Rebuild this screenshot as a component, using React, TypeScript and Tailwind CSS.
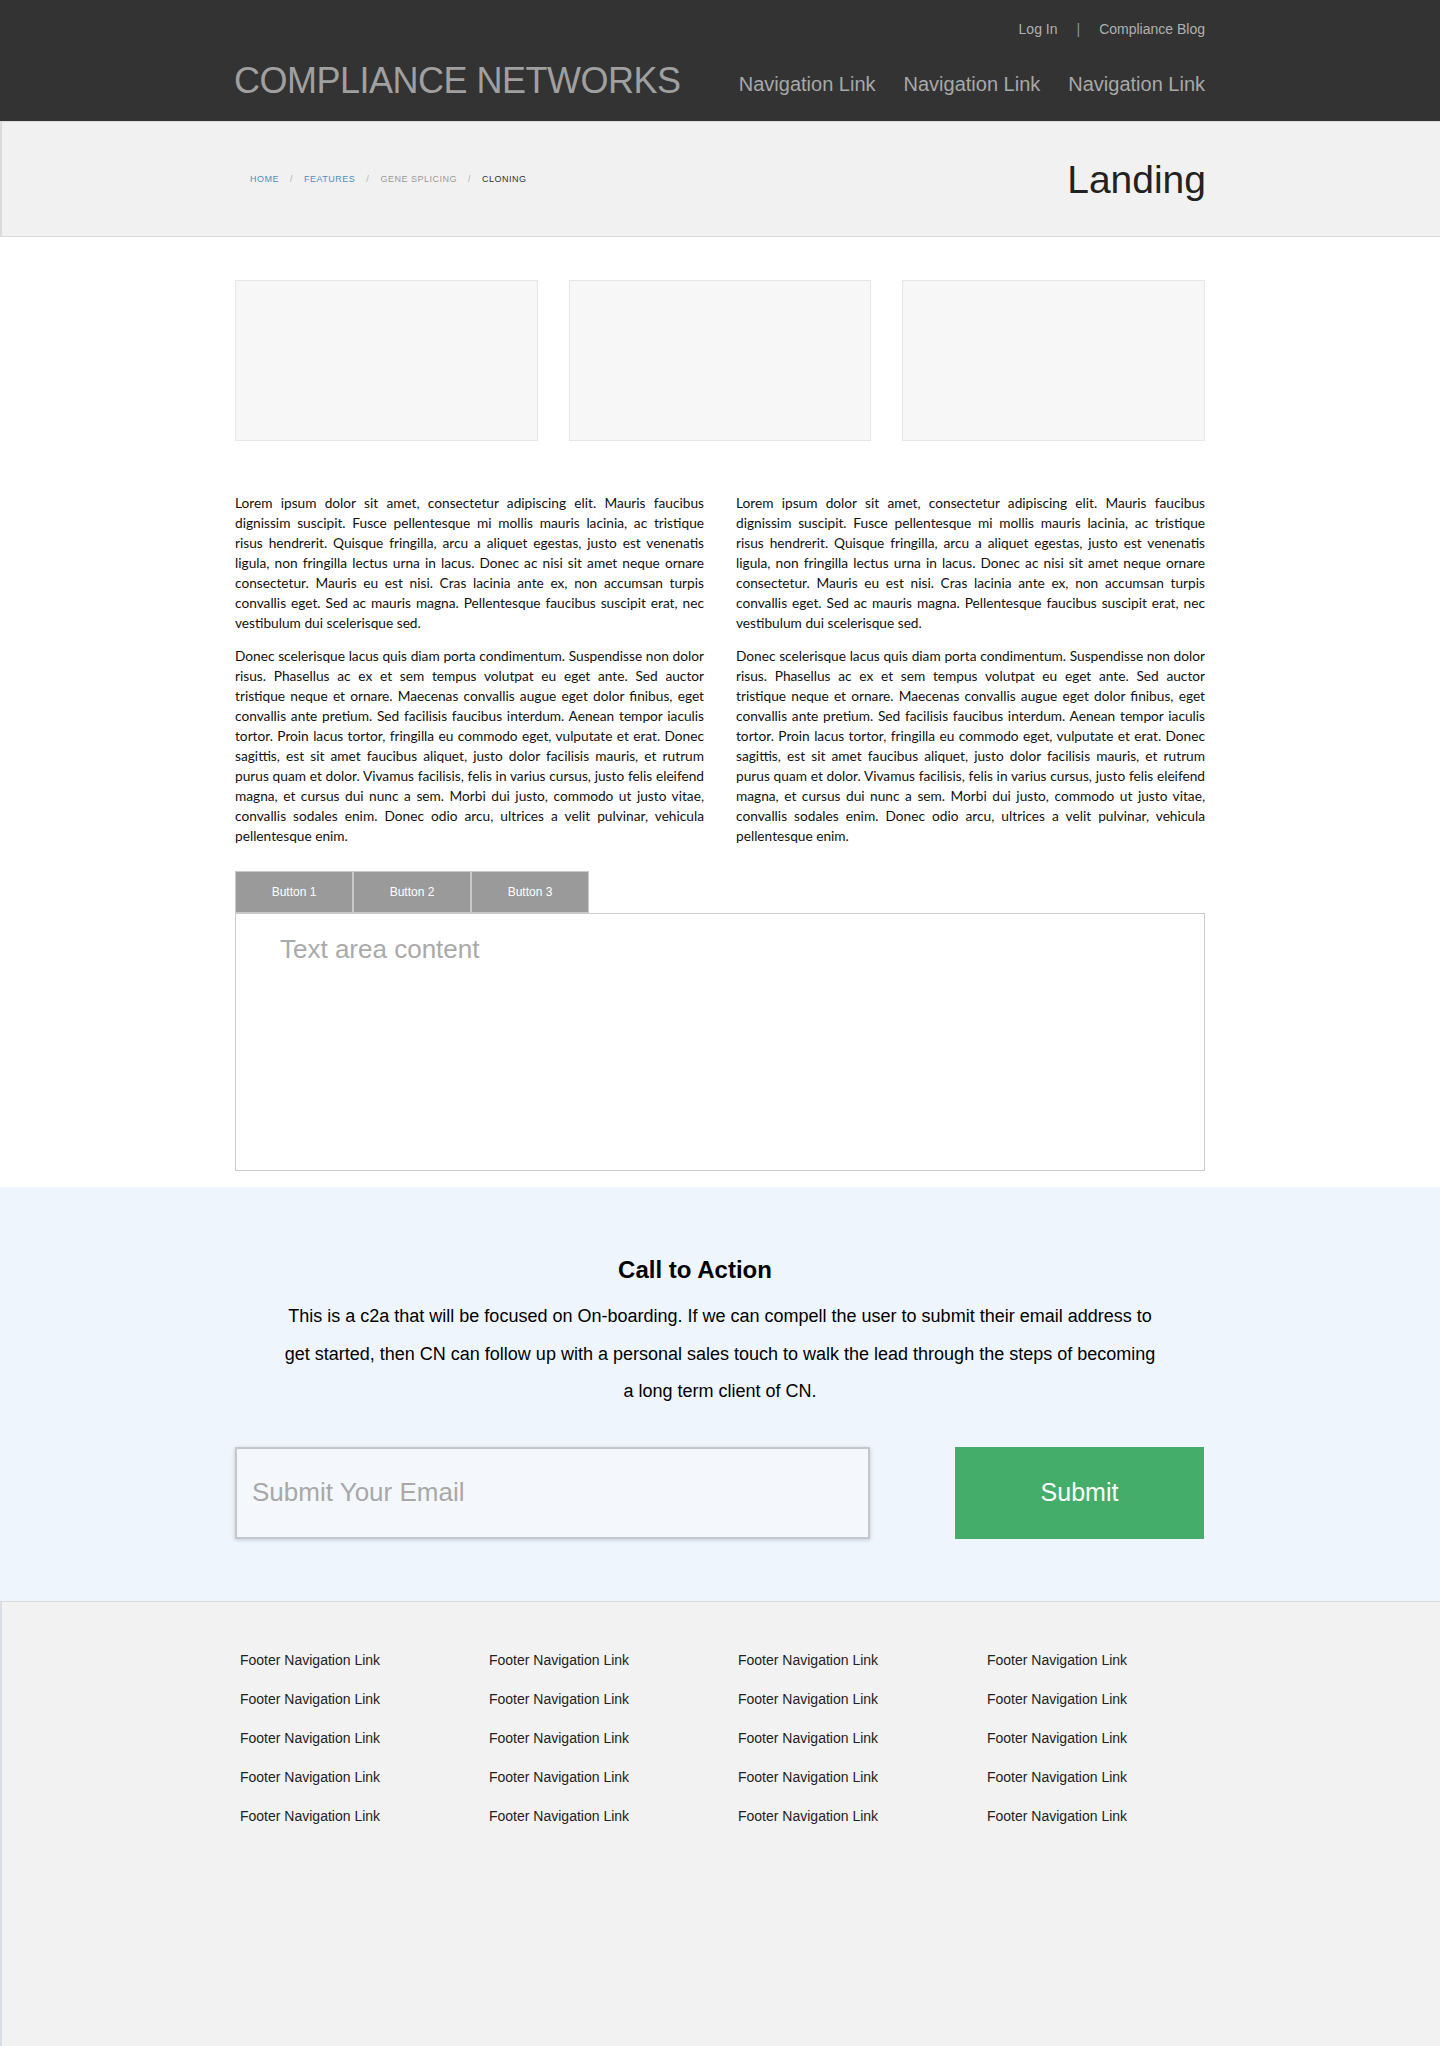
const lorem1 =
  'Lorem ipsum dolor sit amet, consectetur adipiscing elit. Mauris faucibus dignissim suscipit. Fusce pellentesque mi mollis mauris lacinia, ac tristique risus hendrerit. Quisque fringilla, arcu a aliquet egestas, justo est venenatis ligula, non fringilla lectus urna in lacus. Donec ac nisi sit amet neque ornare consectetur. Mauris eu est nisi. Cras lacinia ante ex, non accumsan turpis convallis eget. Sed ac mauris magna. Pellentesque faucibus suscipit erat, nec vestibulum dui scelerisque sed.'

const lorem2 =
  'Donec scelerisque lacus quis diam porta condimentum. Suspendisse non dolor risus. Phasellus ac ex et sem tempus volutpat eu eget ante. Sed auctor tristique neque et ornare. Maecenas convallis augue eget dolor finibus, eget convallis ante pretium. Sed facilisis faucibus interdum. Aenean tempor iaculis tortor. Proin lacus tortor, fringilla eu commodo eget, vulputate et erat. Donec sagittis, est sit amet faucibus aliquet, justo dolor facilisis mauris, et rutrum purus quam et dolor. Vivamus facilisis, felis in varius cursus, justo felis eleifend magna, et cursus dui nunc a sem. Morbi dui justo, commodo ut justo vitae, convallis sodales enim. Donec odio arcu, ultrices a velit pulvinar, vehicula pellentesque enim.'

export default function App() {
  return (
    <div className="min-h-screen bg-white font-['Liberation_Sans',Arial,sans-serif]">
      {/* Header */}
      <header className="h-[121px] bg-[#333333]">
        <div className="w-[970px] mx-auto pt-[20px]">
          <div className="flex justify-end items-center gap-[19px] h-[18px] text-[14px] leading-[18px] text-[#b0b0b0]">
            <a href="#">Log In</a>
            <span className="text-[#8a96a3]">|</span>
            <a href="#">Compliance Blog</a>
          </div>
          <div className="flex justify-between items-start mt-[25px]">
            <a href="#" className="text-[36px] leading-[36px] tracking-[-0.5px] text-[#a0a0a0] -ml-[1px]">
              COMPLIANCE NETWORKS
            </a>
            <nav className="flex gap-[28px] mt-[11px] text-[20px] leading-[20px] text-[#a8a8a8]">
              <a href="#">Navigation Link</a>
              <a href="#">Navigation Link</a>
              <a href="#">Navigation Link</a>
            </nav>
          </div>
        </div>
      </header>

      {/* Breadcrumb band */}
      <section className="h-[116px] bg-[#f1f1f1] border-t border-b border-l-2 border-[#dadada]">
        <div className="w-[970px] mx-auto h-full flex items-center justify-between">
          <ol className="flex items-center pl-[14px] pt-[2px] text-[9px] tracking-[0.5px] uppercase">
            <li className="text-[#4a90c2]">Home</li>
            <li className="px-[11px] text-[#b0b0b0]">/</li>
            <li className="text-[#4a90c2]">Features</li>
            <li className="px-[11px] text-[#b0b0b0]">/</li>
            <li className="text-[#9a9a9a]">Gene Splicing</li>
            <li className="px-[11px] text-[#b0b0b0]">/</li>
            <li className="text-[#333]">Cloning</li>
          </ol>
          <h1 className="text-[39px] leading-[39px] text-[#222]">Landing</h1>
        </div>
      </section>

      {/* Main content */}
      <main className="pt-[43px] pb-[16px]">
        <div className="w-[970px] mx-auto">
          <div className="grid grid-cols-3 gap-[31px]">
            <div className="h-[161px] bg-[#f7f7f7] border border-[#e6e6e6]" />
            <div className="h-[161px] bg-[#f7f7f7] border border-[#e6e6e6]" />
            <div className="h-[161px] bg-[#f7f7f7] border border-[#e6e6e6]" />
          </div>

          <div className="grid grid-cols-2 gap-[32px] mt-[52px] font-['Lato',sans-serif] text-[13.7px] leading-[20px] text-[#111] text-justify">
            <div>
              <p className="mb-[13px]">{lorem1}</p>
              <p>{lorem2}</p>
            </div>
            <div>
              <p className="mb-[13px]">{lorem1}</p>
              <p>{lorem2}</p>
            </div>
          </div>

          <div className="flex mt-[25px]">
            {['Button 1', 'Button 2', 'Button 3'].map((label) => (
              <button
                key={label}
                className="w-[118px] h-[42px] bg-[#9a9a9a] border border-[#c8c8c8] text-white text-[12px]"
              >
                {label}
              </button>
            ))}
          </div>
          <div className="h-[258px] border border-[#cccccc] pl-[44px] pt-[20px] text-[26px] leading-[30px] text-[#aaaaaa]">
            Text area content
          </div>
        </div>
      </main>

      {/* Call to action */}
      <section className="h-[414px] bg-[#eef5fd] pt-[69px]">
        <div className="w-[970px] mx-auto">
          <h2 className="text-center pr-[50px] text-[24px] leading-[28px] font-bold text-black">
            Call to Action
          </h2>
          <p className="mt-[14px] text-center text-[18px] leading-[37.5px] text-black">
            This is a c2a that will be focused on On-boarding. If we can compell the user to submit their email address to
            <br />
            get started, then CN can follow up with a personal sales touch to walk the lead through the steps of becoming
            <br />
            a long term client of CN.
          </p>
          <div className="flex justify-between mt-[36px]">
            <div className="w-[635px] h-[92px] flex items-center pl-[15px] bg-[#f4f8fc] border-2 border-[#c3c6ca] shadow-[0_1px_4px_rgba(0,0,0,0.18)] text-[26px] text-[#a8a8a8]">
              Submit Your Email
            </div>
            <button className="w-[249px] h-[92px] mr-[1px] bg-[#44ad6a] text-white text-[25px]">
              Submit
            </button>
          </div>
        </div>
      </section>

      {/* Footer */}
      <footer className="h-[445px] bg-[#f2f2f2] border-t border-l-2 border-[#d9dce0] pt-[39px]">
        <div className="w-[970px] mx-auto pl-[4px]">
          <div className="grid grid-cols-[249px_249px_249px_249px] text-[14px] leading-[39px] text-[#222]">
            {Array.from({ length: 4 }).map((_, col) => (
              <ul key={col}>
                {Array.from({ length: 5 }).map((_, row) => (
                  <li key={row}>
                    <a href="#">Footer Navigation Link</a>
                  </li>
                ))}
              </ul>
            ))}
          </div>
        </div>
      </footer>
    </div>
  )
}
